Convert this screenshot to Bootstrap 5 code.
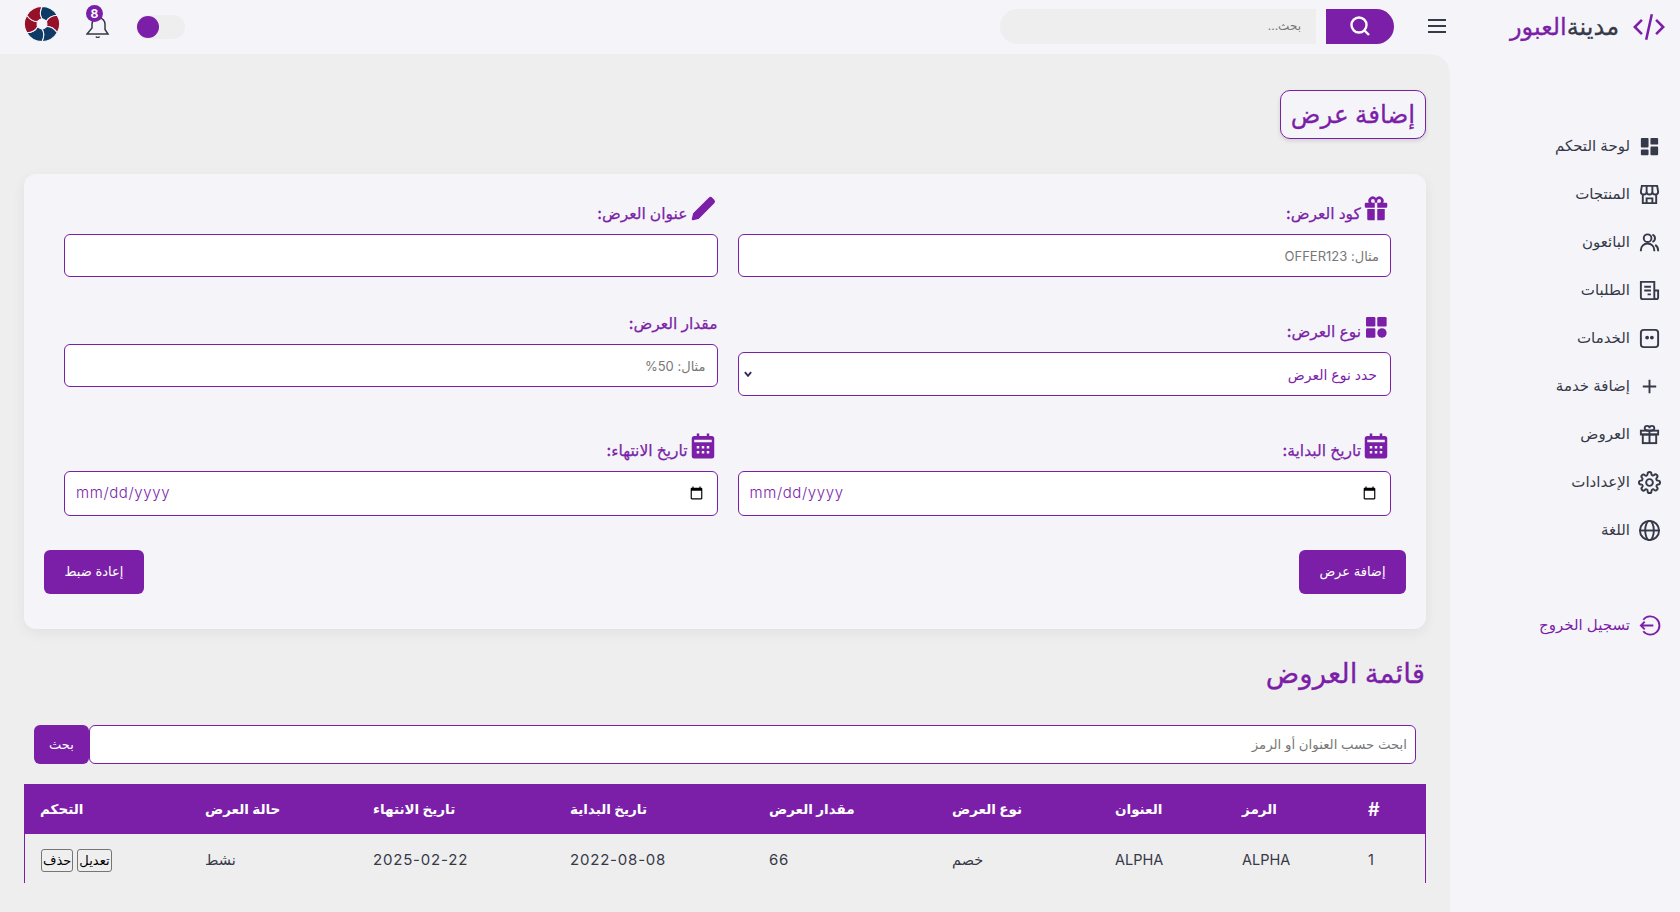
<!DOCTYPE html>
<html lang="ar" dir="rtl">
<head>
    <meta charset="UTF-8">
    <title>إضافة عرض</title>
    <meta name="viewport" content="width=device-width, initial-scale=1.0">
    <link href="https://cdn.jsdelivr.net/npm/bootstrap@5.3.0/dist/css/bootstrap.min.css" rel="stylesheet">
    <style>
        :root { --plum: #7b1fa8; --ink: #363949; --pale: #f5f5f9; --mist: #eeeeee; }
        html, body { height: 100%; }
        body { font-family: "Inter", "DejaVu Sans", sans-serif; background: var(--pale); color: var(--ink); overflow: hidden; }
        .side-col { width: 230px; flex: none; }
        .page-col { min-width: 0; }
        .brand-row { height: 54px; padding-right: 14px; gap: 13px; color: var(--ink); font-size: 24px; font-weight: 500; -webkit-text-stroke: .3px; }
        .brand-row svg { width: 34px; height: 34px; color: var(--plum); }
        .brand-row span span { color: var(--plum); }
        .side-nav { margin-top: 68px; padding-right: 19px; }
        .side-link { height: 48px; color: var(--ink); text-decoration: none; font-size: 15px; gap: 8px; }
        .side-link svg { width: 23px; height: 23px; flex: none; }
        .side-exit { margin-top: 47px; color: var(--plum); }
        .top-strip { height: 54px; padding: 0 3px 0 24px; }
        .menu-btn { width: 20px; height: 20px; color: var(--ink); flex: none; margin-bottom: 2px; }
        .top-search { width: 394px; margin: 0 33px 2px 0; gap: 10px; height: 35px; }
        .top-search input { flex: 1; border: 0; background: var(--mist); border-radius: 20px 0 0 20px; font-size: 12px; padding: 0 15px; outline: 0; }
        .top-search input::placeholder, .offer-input::placeholder, .table-search input::placeholder { color: #777; opacity: 1; }
        .top-search button { width: 68px; border: 0; background: var(--plum); color: #fff; border-radius: 0 20px 20px 0; }
        .top-search svg { width: 24px; height: 24px; }
        .top-tools { margin-right: auto; gap: 26px; }
        .mode-switch { width: 49px; height: 24px; background: var(--mist); border-radius: 12px; }
        .mode-switch i { display: block; width: 22px; height: 22px; margin: 1px; background: var(--plum); border-radius: 50%; }
        .bell-wrap { width: 24px; height: 24px; color: var(--ink); margin-bottom: 6px; }
        .bell-count { top: -7px; right: 7px; width: 17px; height: 17px; border-radius: 50%; background: var(--plum); color: #fff; font-size: 12px; font-weight: 700; line-height: 17px; text-align: center; }
        .logo-mark { width: 36px; height: 36px; margin-bottom: 6px; }
        .main-pane { background: var(--mist); border-top-right-radius: 20px; padding: 36px 24px 0; min-height: 0; }
        .page-title { color: var(--plum); background: var(--pale); border: 1px solid var(--plum); border-radius: 10px; box-shadow: 0 2px 4px rgba(0,0,0,.12); font-size: 24.500px; font-weight: 500; padding: 7px 10px; line-height: 33px; margin: 0; -webkit-text-stroke: .3px; }
        .form-panel { background: var(--pale); border-radius: 12px; box-shadow: 0 4px 14px rgba(0,0,0,.06); margin-top: 35px; padding: 20px 20px 35px; }
        .form-grid { display: grid; grid-template-columns: 1fr 1fr; column-gap: 20px; row-gap: 35px; padding: 0 15px 0 20px; align-items: start; }
        .offer-label { display: flex; align-items: flex-end; margin-bottom: 7px; padding-bottom: 1px; color: var(--plum); font-size: 15.500px; font-weight: 500; line-height: 24px; -webkit-text-stroke: .25px; }
        .offer-label svg { width: 30px; height: 30px; margin-bottom: 2px; flex: none; }
        .offer-input { height: 43px; border: 1px solid var(--plum); border-radius: 6px; font-size: 13px; padding: 0 11px; box-shadow: none; }
        .offer-date { height: 45px; color: var(--plum); font-size: 15px; font-weight: 300; letter-spacing: .6px; }
        .offer-select { height: 44px; color: var(--plum); border-color: var(--plum); border-radius: 6px; font-size: 14px; padding: 0 13px; background-position: left 4px center; background-size: 10px 10px; background-image: url("data:image/svg+xml,%3csvg xmlns='http://www.w3.org/2000/svg' viewBox='0 0 16 16'%3e%3cpath fill='none' stroke='%23362a5a' stroke-width='3' d='M3 5l5 6 5-6'/%3e%3c/svg%3e"); }
        .plum-btn { background: var(--plum); color: #fff; border: 0; border-radius: 6px; font-size: 13px; height: 44px; padding: 0 20.500px; }
        .plum-btn:hover { background: var(--plum); color: #fff; }
        .form-actions { margin-top: 34px; }
        .list-title { color: var(--plum); font-size: 27.700px; font-weight: 500; line-height: 40px; margin: 24px 1px 0 0; -webkit-text-stroke: .3px; }
        .table-search { margin: 32px 10px 0 10px; height: 39px; }
        .table-search input { flex: 1; border: 1px solid var(--plum); border-radius: 6px; font-size: 13.300px; padding: 0 8px; outline: 0; }
        .table-search button { width: 55px; background: var(--plum); color: #fff; border: 0; border-radius: 6px; font-size: 13px; }
        .offer-table { table-layout: fixed; margin: 20px 0 0; width: 1402px; --bs-table-bg: transparent; border-collapse: separate; border-spacing: 0; }
        .offer-table th, .offer-table td { text-align: left; border: 0; padding: 0 16px; vertical-align: middle; }
        .offer-table th { background: var(--plum); color: #fff; height: 50px; font-size: 13.500px; font-weight: 600; }
        .offer-table th:first-child { font-size: 18px; }
        .offer-table td { height: 49px; padding-top: 3px; color: var(--ink); font-size: 14.500px; }
        .offer-table td:first-child { border-right: 1px solid var(--plum); }
        .offer-table td:last-child { border-left: 1px solid var(--plum); }
        .offer-table tr > :nth-child(1) { width: 74px; }
        .offer-table tr > :nth-child(2) { width: 126px; }
        .offer-table tr > :nth-child(3) { width: 127px; }
        .offer-table tr > :nth-child(4) { width: 163px; }
        .offer-table tr > :nth-child(5) { width: 183px; }
        .offer-table tr > :nth-child(6) { width: 199px; }
        .offer-table tr > :nth-child(7) { width: 197px; }
        .offer-table tr > :nth-child(8) { width: 168px; }
        .offer-table tr > :nth-child(9) { width: 165px; }
        .offer-table .num-cell { font-size: 15px; letter-spacing: .8px; }
        .row-btn { border: 1px solid #767676; border-radius: 3px; background: #efefef; color: #000; font: 13px "Liberation Sans", "DejaVu Sans", sans-serif; height: 23px; padding: 0 1px; }
        .row-btn + .row-btn { margin-right: 4px; }
    </style>
</head>
<body class="d-flex">

<svg width="0" height="0" class="position-absolute">
    <defs>
        <symbol id="ic-gift-line" viewBox="0 0 24 24" fill="none" stroke="currentColor" stroke-width="2"><rect x="3" y="8" width="18" height="4"/><rect x="5" y="12" width="14" height="9"/><path d="M12 8v13M12 8C10 8 7 8 7 5.500A2.500 2.500 0 0 1 12 5.500A2.500 2.500 0 0 1 17 5.500C17 8 14 8 12 8z"/></symbol>
        <symbol id="ic-gift-fill" viewBox="0 0 24 24" fill="currentColor"><path d="M5 12v8a1 1 0 0 0 1 1h5v-9zM13 12v9h5a1 1 0 0 0 1-1v-8zM20 7h-2.200A3.500 3.500 0 0 0 12 3.200 3.500 3.500 0 0 0 6.200 7H4a1 1 0 0 0-1 1v2a1 1 0 0 0 1 1h7V7h2v4h7a1 1 0 0 0 1-1V8a1 1 0 0 0-1-1zM9.500 7A1.500 1.500 0 1 1 11 5.500V7zm5 0H13V5.500A1.500 1.500 0 1 1 14.500 7z"/></symbol>
        <symbol id="ic-calendar" viewBox="0 0 24 24" fill="currentColor"><path d="M21 20V6a2 2 0 0 0-2-2h-2V2h-2v2H9V2H7v2H5a2 2 0 0 0-2 2v14a2 2 0 0 0 2 2h14a2 2 0 0 0 2-2zM9 18H7v-2h2zm0-4H7v-2h2zm4 4h-2v-2h2zm0-4h-2v-2h2zm4 4h-2v-2h2zm0-4h-2v-2h2zm2-5H5V7h14z"/></symbol>
    </defs>
</svg>

<div class="flex-grow-0 side-col d-flex flex-column">
    <div class="brand-row d-flex align-items-center">
        <svg viewBox="0 0 24 24" fill="none" stroke="currentColor" stroke-width="1.800"><path d="M7 7l-5 5 5 5M17 7l5 5-5 5M14 3l-4 18"/></svg>
        <span>مدينة<span>العبور</span></span>
    </div>
    <nav class="side-nav d-flex flex-column">
        <a href="#" class="side-link d-flex align-items-center">
            <svg viewBox="0 0 24 24" fill="currentColor"><path d="M4 13h6a1 1 0 0 0 1-1V4a1 1 0 0 0-1-1H4a1 1 0 0 0-1 1v8a1 1 0 0 0 1 1zm-1 7a1 1 0 0 0 1 1h6a1 1 0 0 0 1-1v-4a1 1 0 0 0-1-1H4a1 1 0 0 0-1 1v4zm10 0a1 1 0 0 0 1 1h6a1 1 0 0 0 1-1v-7a1 1 0 0 0-1-1h-6a1 1 0 0 0-1 1v7zm1-10h6a1 1 0 0 0 1-1V4a1 1 0 0 0-1-1h-6a1 1 0 0 0-1 1v5a1 1 0 0 0 1 1z"/></svg>
            لوحة التحكم
        </a>
        <a href="#" class="side-link d-flex align-items-center">
            <svg viewBox="0 0 24 24" fill="none" stroke="currentColor" stroke-width="2"><path d="M5 12v9h14v-9M3 9l1-6h16l1 6a3 3 0 0 1-6 0 3 3 0 0 1-6 0 3 3 0 0 1-6 0zM9 3v6M15 3v6M9 21v-5h6v5"/></svg>
            المنتجات
        </a>
        <a href="#" class="side-link d-flex align-items-center">
            <svg viewBox="0 0 24 24" fill="none" stroke="currentColor" stroke-width="2"><circle cx="10" cy="7.500" r="4"/><path d="M3 21v-1a7 7 0 0 1 14 0v1M15 3.700a4 4 0 0 1 0 7.600M18 14.500a7 7 0 0 1 3 5.500v1"/></svg>
            البائعون
        </a>
        <a href="#" class="side-link d-flex align-items-center">
            <svg viewBox="0 0 24 24" fill="none" stroke="currentColor" stroke-width="2"><path d="M17 21H5a2 2 0 0 1-2-2V3h14v16a2 2 0 0 0 4 0v-7h-4M6.500 8h7M6.500 12h7M10 16h3.500"/></svg>
            الطلبات
        </a>
        <a href="#" class="side-link d-flex align-items-center">
            <svg viewBox="0 0 24 24" fill="none" stroke="currentColor" stroke-width="2"><rect x="3" y="3" width="18" height="18" rx="3"/><circle cx="9.500" cy="11" r="1" fill="currentColor"/><circle cx="14.500" cy="11" r="1" fill="currentColor"/></svg>
            الخدمات
        </a>
        <a href="#" class="side-link d-flex align-items-center">
            <svg viewBox="0 0 24 24" fill="none" stroke="currentColor" stroke-width="2"><path d="M12 5v14M5 12h14"/></svg>
            إضافة خدمة
        </a>
        <a href="#" class="side-link d-flex align-items-center">
            <svg><use href="#ic-gift-line"/></svg>
            العروض
        </a>
        <a href="#" class="side-link d-flex align-items-center">
            <svg viewBox="0 0 24 24" fill="none" stroke="currentColor" stroke-width="2"><circle cx="12" cy="12" r="3.500"/><path d="M19.400 15a1.650 1.650 0 0 0 .33 1.820l.06.06a2 2 0 0 1-2.830 2.830l-.06-.06a1.650 1.650 0 0 0-2.820 1.180V21a2 2 0 0 1-4 0v-.09A1.650 1.650 0 0 0 7.180 19.730l-.06.06a2 2 0 0 1-2.830-2.830l.06-.06A1.650 1.650 0 0 0 3.090 14H3a2 2 0 0 1 0-4h.09A1.650 1.650 0 0 0 4.270 7.180l-.06-.06a2 2 0 0 1 2.830-2.830l.06.06A1.650 1.650 0 0 0 10 3.090V3a2 2 0 0 1 4 0v.09a1.650 1.650 0 0 0 2.820 1.180l.06-.06a2 2 0 0 1 2.830 2.830l-.06.06A1.650 1.650 0 0 0 20.910 10H21a2 2 0 0 1 0 4h-.09a1.650 1.650 0 0 0-1.510 1z"/></svg>
            الإعدادات
        </a>
        <a href="#" class="side-link d-flex align-items-center">
            <svg viewBox="0 0 24 24" fill="none" stroke="currentColor" stroke-width="2"><circle cx="12" cy="12" r="10"/><ellipse cx="12" cy="12" rx="4.500" ry="10"/><path d="M2 12h20"/></svg>
            اللغة
        </a>
        <a href="#" class="side-link side-exit d-flex align-items-center">
            <svg viewBox="0 0 24 24" fill="none" stroke="currentColor" stroke-width="2"><path d="M5.500 6A9.500 9.500 0 1 1 5.500 18M16 12H3M7 8l-4 4 4 4"/></svg>
            تسجيل الخروج
        </a>
    </nav>
</div>

<div class="flex-grow-1 page-col d-flex flex-column">
    <div class="top-strip d-flex align-items-center">
        <svg class="menu-btn" viewBox="0 0 20 20" fill="none" stroke="currentColor" stroke-width="2"><path d="M1 4h18M1 10h18M1 16h18"/></svg>
        <form class="top-search d-flex">
            <button type="button" class="d-flex align-items-center justify-content-center">
                <svg viewBox="0 0 24 24" fill="none" stroke="currentColor" stroke-width="2.400"><circle cx="11" cy="11" r="7.500"/><path d="M16.500 16.500L21 21"/></svg>
            </button>
            <input type="text" placeholder="بحث...">
        </form>
        <div class="top-tools d-flex align-items-center">
            <div class="mode-switch d-flex align-items-center justify-content-end"><i></i></div>
            <div class="bell-wrap position-relative">
                <svg viewBox="0 0 24 24" fill="none" stroke="currentColor" stroke-width="1.500"><path d="M1 20h21l-3-4.500V11A7 7 0 0 0 13 3.500 7 7 0 0 0 6 11v3zM10 22.500a2 2 0 0 0 3.500 0"/></svg>
                <span class="bell-count position-absolute">8</span>
            </div>
            <svg class="logo-mark" viewBox="-20 -20 40 40">
                <defs><path id="blade" stroke="#f5f5f9" stroke-width="1.200" d="M0-19.500A19.500 19.500 0 0 1 16.900-9.750Q8-9 5-3Q3-5-.1-5.830Q-3.790-11.430 0-19.500Z"/></defs>
                <use href="#blade" fill="#0e3a66"/>
                <use href="#blade" fill="#96102a" transform="rotate(60)"/>
                <use href="#blade" fill="#0e3a66" transform="rotate(120)"/>
                <use href="#blade" fill="#0e3a66" transform="rotate(180)"/>
                <use href="#blade" fill="#96102a" transform="rotate(240)"/>
                <use href="#blade" fill="#96102a" transform="rotate(300)"/>
            </svg>
        </div>
    </div>

    <main class="main-pane flex-grow-1">
        <div class="d-flex">
            <h1 class="page-title">إضافة عرض</h1>
        </div>

        <form class="form-panel">
            <div class="form-grid">
                <div>
                    <label class="offer-label"><svg><use href="#ic-gift-fill"/></svg>كود العرض:</label>
                    <input type="text" class="form-control offer-input" placeholder="مثال: OFFER123">
                </div>
                <div>
                    <label class="offer-label"><svg viewBox="0 0 24 24" fill="currentColor"><path d="M4 21a1 1 0 0 0 .24 0l4-1a1 1 0 0 0 .47-.26L21 7.410a2 2 0 0 0 0-2.820L19.420 3a2 2 0 0 0-2.830 0L4.300 15.290a1.060 1.060 0 0 0-.27.47l-1 4A1 1 0 0 0 3.760 21 .97 .97 0 0 0 4 21z"/></svg>عنوان العرض:</label>
                    <input type="text" class="form-control offer-input">
                </div>
                <div>
                    <label class="offer-label"><svg viewBox="0 0 24 24" fill="currentColor"><rect x="4" y="4" width="7.500" height="7.500" rx="1"/><rect x="13" y="4" width="7.500" height="7.500" rx="1"/><rect x="4" y="13" width="7.500" height="7.500" rx="1"/><circle cx="16.750" cy="16.750" r="3.750"/></svg>نوع العرض:</label>
                    <select class="form-select offer-select">
                        <option>حدد نوع العرض</option>
                    </select>
                </div>
                <div>
                    <label class="offer-label">مقدار العرض:</label>
                    <input type="text" class="form-control offer-input" placeholder="مثال: 50%">
                </div>
                <div>
                    <label class="offer-label"><svg><use href="#ic-calendar"/></svg>تاريخ البداية:</label>
                    <input type="date" dir="ltr" class="form-control offer-input offer-date">
                </div>
                <div>
                    <label class="offer-label"><svg><use href="#ic-calendar"/></svg>تاريخ الانتهاء:</label>
                    <input type="date" dir="ltr" class="form-control offer-input offer-date">
                </div>
            </div>
            <div class="form-actions d-flex justify-content-between">
                <button type="submit" class="btn plum-btn">إضافة عرض</button>
                <button type="reset" class="btn plum-btn">إعادة ضبط</button>
            </div>
        </form>

        <h2 class="list-title">قائمة العروض</h2>

        <div class="table-search d-flex">
            <input type="text" placeholder="ابحث حسب العنوان أو الرمز">
            <button type="button">بحث</button>
        </div>

        <table class="table offer-table">
            <thead>
                <tr>
                    <th>#</th>
                    <th>الرمز</th>
                    <th>العنوان</th>
                    <th>نوع العرض</th>
                    <th>مقدار العرض</th>
                    <th>تاريخ البداية</th>
                    <th>تاريخ الانتهاء</th>
                    <th>حالة العرض</th>
                    <th>التحكم</th>
                </tr>
            </thead>
            <tbody>
                <tr>
                    <td>1</td>
                    <td>ALPHA</td>
                    <td>ALPHA</td>
                    <td>خصم</td>
                    <td class="num-cell">66</td>
                    <td class="num-cell">2022-08-08</td>
                    <td class="num-cell">2025-02-22</td>
                    <td>نشط</td>
                    <td>
                        <button class="row-btn">تعديل</button><button class="row-btn">حذف</button>
                    </td>
                </tr>
            </tbody>
        </table>
    </main>
</div>

<script src="https://cdn.jsdelivr.net/npm/bootstrap@5.3.0/dist/js/bootstrap.bundle.min.js"></script>
</body>
</html>
